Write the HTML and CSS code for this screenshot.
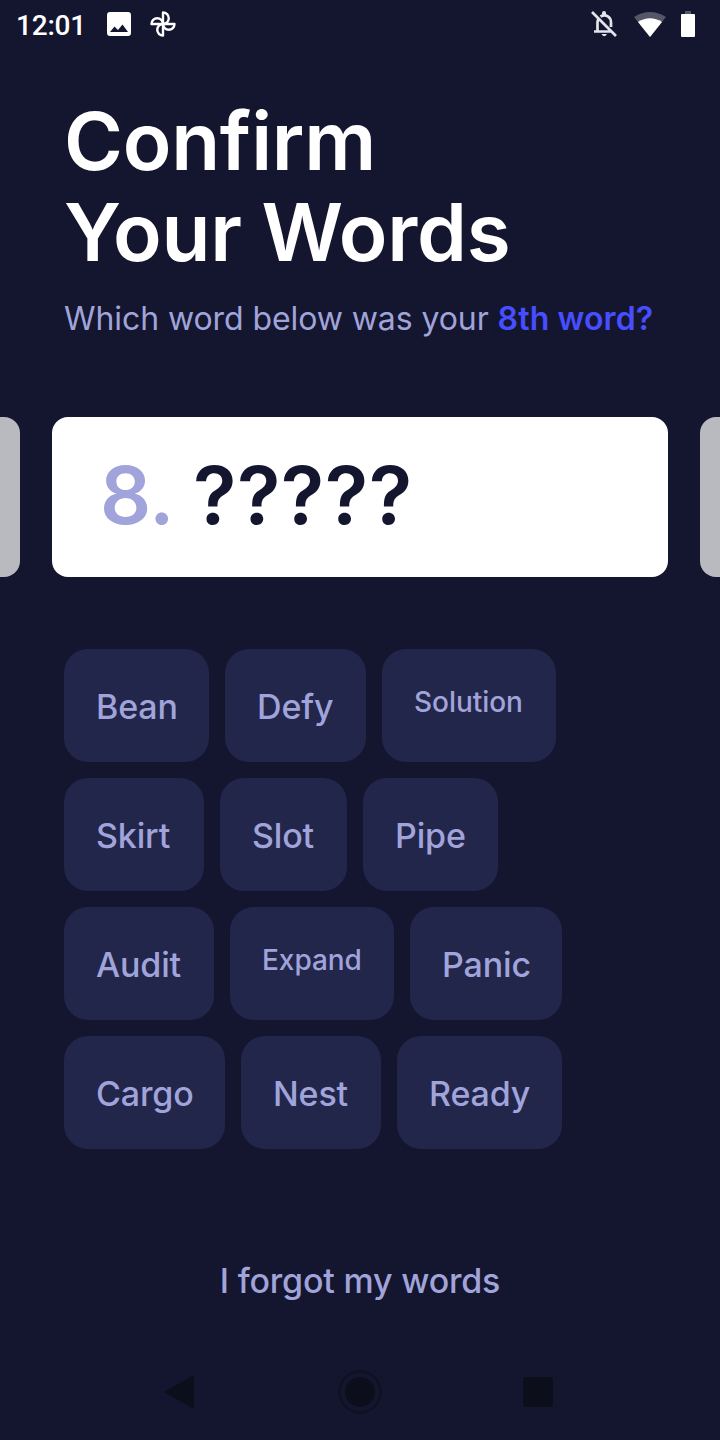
FILE: index.html
```html
<!DOCTYPE html>
<html lang="en"><head><meta charset="utf-8"><title>Confirm Your Words</title><link rel="stylesheet" href="styles.css"></head>
<body><main class="screen">
<header class="status"><span class="clock">12:01</span>
<svg class="photo" width="24" height="24" viewBox="0 0 24 24"><path fill="#fff" fill-rule="evenodd" d="M3 0h18a3 3 0 0 1 3 3v18a3 3 0 0 1-3 3H3a3 3 0 0 1-3-3V3a3 3 0 0 1 3-3ZM3 20h18l-5.500-7.500-4.500 5.500-3.500-3.500Z"/></svg>
<svg class="fan" width="26" height="26" viewBox="0 0 26 26"><g fill="none" stroke="#fff" stroke-width="2.400" stroke-linejoin="round"><path d="M13 13V1.500a5.750 5.750 0 0 1 0 11.500Z"/><path d="M13 13h11.500a5.750 5.750 0 0 1-11.500 0Z"/><path d="M13 13v11.500a5.750 5.750 0 0 1 0-11.500Z"/><path d="M13 13H1.500a5.750 5.750 0 0 1 11.500 0Z"/></g></svg>
<span class="grow"></span>
<svg class="bell" width="28" height="28" viewBox="0 0 28 28"><g fill="none" stroke="#e4e4ec" stroke-width="2.700"><path d="M2 2l24 24M7.500 21V12.500q0-2.500 1.500-4.500M4 21.500h17M10.500 6.500C16 3.500 21 7 21 12.500V17"/></g><path fill="#e4e4ec" d="M12 6V3a2 2 0 0 1 4 0v3zM11.500 24h5.500q-2.750 4.500-5.500 0"/></svg>
<svg class="wifi" width="32" height="25" viewBox="0 0 32 25"><path fill="#555768" d="M0 5Q16-5 32 5L16 25Z"/><path fill="#fff" d="M4 10Q16 2.500 28 10L16 25Z"/></svg>
<svg class="battery" width="14" height="26" viewBox="0 0 14 26"><path fill="#555768" d="M4 0h6v3H4z"/><rect y="3" width="14" height="23" rx="1" fill="#fff"/></svg>
</header>
<h1 class="title">Confirm<br>Your Words</h1>
<p class="question">Which word below was your <strong>8th word?</strong></p>
<section class="carousel"><div class="side left"></div><div class="card"><span class="number">8.</span><span class="answer">?????</span></div><div class="side right"></div></section>
<section class="words">
<div class="row"><button class="word w145">Bean</button><button class="word w141">Defy</button><button class="word w174 small">Solution</button></div>
<div class="row"><button class="word w140">Skirt</button><button class="word w127">Slot</button><button class="word w135">Pipe</button></div>
<div class="row"><button class="word w150">Audit</button><button class="word w164 small">Expand</button><button class="word w152">Panic</button></div>
<div class="row"><button class="word w161">Cargo</button><button class="word w140">Nest</button><button class="word w165">Ready</button></div>
</section>
<a class="forgot">I forgot my words</a>
<nav class="nav"><svg width="720" height="60" viewBox="0 0 720 60"><g fill="#0d0e1b"><path d="M164 32l30-17v34z"/><circle cx="360" cy="32" r="15"/><circle cx="360" cy="32" r="20.500" fill="none" stroke="#101124" stroke-width="3"/><rect x="523" y="17" width="30" height="30" rx="2"/></g></svg></nav>
</main></body></html>
```
FILE: styles.css
```css
* { box-sizing: border-box; }
body { margin: 0; background: #14152e; font-family: Inter, sans-serif; }
.screen { width: 720px; height: 1440px; overflow: hidden; display: flex; flex-direction: column; background: #14152e; color: #a0a4da; }
.status { height: 50px; display: flex; align-items: center; padding: 0 25px 2px 16px; flex: none; }
.clock { width: 91px; color: #fff; font: 500 28px/50px Roboto, sans-serif; letter-spacing: -0.2px; padding-top: 3px; }
.fan { margin-left: 19px; }
.grow { flex: 1; }
.bell { margin-right: 16px; }
.wifi { margin-right: 15px; }
.title { margin: 45px 0 0 64px; height: 184px; font-size: 80px; font-weight: 600; line-height: 91px; letter-spacing: -0.25px; color: #fff; white-space: nowrap; }
.question { margin: 16px 0 0 64px; height: 48px; font-size: 32px; line-height: 48px; letter-spacing: -0.08px; white-space: nowrap; }
.question strong { color: #474eff; font-weight: 600; letter-spacing: 0.1px; }
.carousel { margin-top: 74px; height: 160px; display: flex; justify-content: space-between; flex: none; }
.side { width: 20px; background: #b9babf; }
.left { border-radius: 0 16px 16px 0; }
.right { border-radius: 16px 0 0 16px; }
.card { width: 616px; background: #fff; border-radius: 16px; padding: 30px 0 0 48px; display: flex; font-size: 80px; font-weight: 600; line-height: 96px; }
.number { width: 93px; letter-spacing: -0.5px; }
.answer { color: #14152e; letter-spacing: 0.45px; }
.words { margin: 72px 0 0 64px; display: flex; flex-direction: column; gap: 16px; }
.row { display: flex; gap: 16px; }
.word { height: 113px; border: 0; border-radius: 24px; padding: 2px 0 0 32px; background: #23264b; color: #a0a4da; font: 500 34px/48px Inter, sans-serif; letter-spacing: -0.15px; text-align: left; white-space: nowrap; }
.small { font-size: 28px; letter-spacing: -0.05px; padding-bottom: 9px; }
.w127 { width: 127px; } .w135 { width: 135px; } .w140 { width: 140px; } .w141 { width: 141px; } .w145 { width: 145px; } .w150 { width: 150px; } .w152 { width: 152px; } .w161 { width: 161px; } .w164 { width: 164px; } .w165 { width: 165px; } .w174 { width: 174px; }
.forgot { margin-top: 108px; text-align: center; font-size: 34px; font-weight: 500; line-height: 48px; letter-spacing: -0.2px; }
.nav { margin-top: 55px; height: 60px; }
```
